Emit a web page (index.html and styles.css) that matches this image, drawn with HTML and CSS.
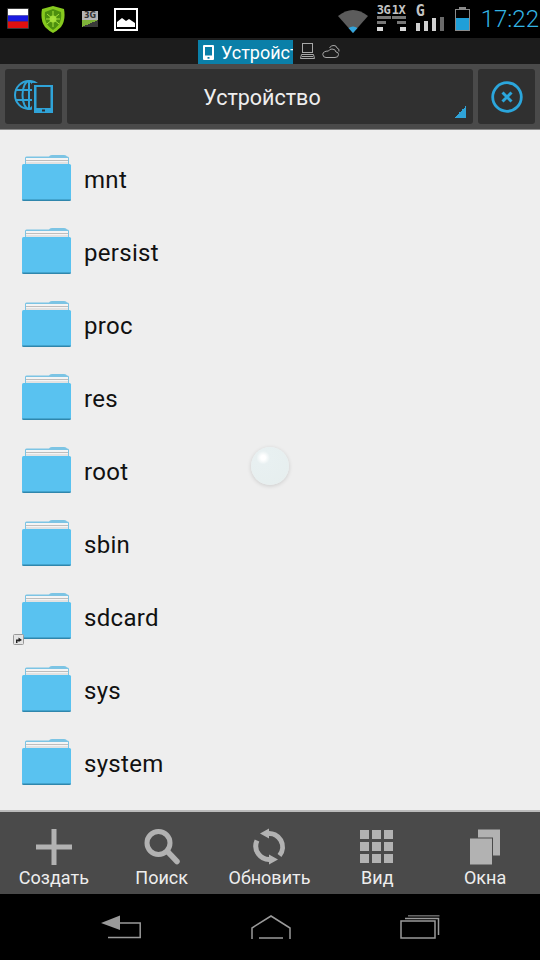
FILE: index.html
```html
<!DOCTYPE html>
<html lang="en">
<head>
    <meta charset="UTF-8">
    <meta name="viewport" content="width=device-width, initial-scale=1.0">
    <title>Устройство</title>
    <link rel="stylesheet" href="styles.css">
</head>
<body>
    <svg class="defs" width="0" height="0">
        <symbol id="folder" viewBox="0 0 50 46">
            <path d="M3 20 V3 Q3 1.500 4.500 1.500 H27 L28 .5 Q28.500 0 30 0 H42 Q43.500 0 44 .5 L45 1.500 H45.500 Q47 1.500 47 3 V20 Z" fill="#7cc4e4"/>
            <rect x="4" y="3" width="42" height="8" fill="#f4f4f4"/>
            <rect x="4" y="5" width="42" height="1" fill="#bdbdbd"/>
            <rect x="4" y="7.500" width="42" height="1" fill="#cfcfcf"/>
            <path d="M0 10.500 Q0 9 1.500 9 H47.500 Q49 9 49 10.500 V44 Q49 46 47 46 H2 Q0 46 0 44 Z" fill="#59c2f0"/>
            <path d="M0 44.500 H49 Q49 46 47 46 H2 Q0 46 0 44.500 Z" fill="#2f86ac"/>
        </symbol>
    </svg>

    <div class="status-bar">
        <div class="status-left">
            <svg class="flag" width="22" height="21" viewBox="0 0 22 21">
                <rect width="22" height="21" rx="1" fill="#3a3a3a"/>
                <rect x="1" y="1" width="20" height="6.500" fill="#fff"/>
                <rect x="1" y="7.500" width="20" height="6" fill="#1a1ae0"/>
                <rect x="1" y="13.500" width="20" height="6.500" fill="#e01010"/>
            </svg>
            <svg class="shield" width="24" height="27" viewBox="0 0 24 27">
                <path d="M12 0 L23 3 Q25 14 20 21 Q16 25 12 27 Q8 25 4 21 Q-1 14 1 3 Z" fill="#86c91e"/>
                <path d="M12 3 L20 6 Q21 14 17.500 19 Q15 22 12 24 Q9 22 6.500 19 Q3 14 4 6 Z" fill="#4c8f0e"/>
                <circle cx="12" cy="13" r="3.500" fill="#9fdc34"/>
                <path d="M6 8 L18 18 M18 8 L6 18 M12 5 V21 M5 13 H19" stroke="#a6e23c" stroke-width="1"/>
            </svg>
            <div class="net-note">
                <span class="net-note-text">3G</span>
                <span class="net-note-bar"></span>
            </div>
            <svg class="picture" width="24" height="23" viewBox="0 0 24 23">
                <rect x="1" y="1" width="22" height="21" fill="#000" stroke="#fff" stroke-width="2"/>
                <path d="M3 19 V14 L8 10 L12 13 L15 11 L21 15 V19 Z" fill="#fff"/>
            </svg>
        </div>
        <div class="status-right">
            <svg class="wifi" width="30" height="24" viewBox="0 0 30 24">
                <path d="M0 7 Q15 -5 30 7 L15 24 Z" fill="#5c5c5c"/>
                <path d="M10.500 19 Q15 16 19.500 19 L15 24 Z" fill="#33a5dc"/>
            </svg>
            <div class="signal-pair">
                <div class="signal-col">
                    <span class="signal-label">3G</span>
                    <span class="signal-line wide"></span>
                    <span class="signal-line mid"></span>
                    <span class="signal-line low"></span>
                </div>
                <div class="signal-col">
                    <span class="signal-label">1X</span>
                    <span class="signal-line wide"></span>
                    <span class="signal-line mid right"></span>
                    <span class="signal-line low right"></span>
                </div>
            </div>
            <div class="signal-g">
                <span class="signal-label">G</span>
                <div class="bars">
                    <span class="bar b1"></span>
                    <span class="bar b2"></span>
                    <span class="bar b3"></span>
                    <span class="bar b4"></span>
                </div>
            </div>
            <svg class="battery" width="15" height="24" viewBox="0 0 15 24">
                <rect x="4" y="0" width="7" height="3" fill="#8a8a8a"/>
                <rect x=".5" y="2.500" width="14" height="21" fill="#000" stroke="#8a8a8a"/>
                <rect x="1" y="11" width="13" height="12" fill="#1f9fd8"/>
            </svg>
            <span class="clock">17:22</span>
        </div>
    </div>

    <div class="tabs">
        <div class="tab-active">
            <svg width="11" height="15" viewBox="0 0 11 15">
                <path fill-rule="evenodd" d="M1 0 H10 Q11 0 11 1 V14 Q11 15 10 15 H1 Q0 15 0 14 V1 Q0 0 1 0 Z M2 2 V10.500 H9 V2 Z M4.500 12 V13.800 H6.500 V12 Z" fill="#fff"/>
            </svg>
            <span class="tab-title">Устройство</span>
        </div>
        <svg class="tab-icon" width="15" height="16" viewBox="0 0 15 16" fill="none" stroke="#a8a8a8">
            <rect x="2.500" y=".5" width="10" height="9"/>
            <path d="M1.500 11.500 H13.500 L14.500 15.500 H.5 Z M2 13.500 H13" />
        </svg>
        <svg class="tab-icon" width="18" height="14" viewBox="0 0 18 14" fill="none" stroke="#a8a8a8">
            <path d="M4 13.500 H13 Q16.500 13.500 16.500 10.500 Q16.500 8 14 8 Q13.500 5 10 5 Q7.500 5 6.500 7 Q1 7 .8 10.500 Q1 13.500 4 13.500 Z"/>
            <path d="M7.500 4 Q9 1 12 1.500 Q14.500 1.500 15 4 Q17.500 4.500 17 7.500"/>
        </svg>
    </div>

    <div class="toolbar">
        <div class="tool-btn">
            <svg width="40" height="33" viewBox="0 0 40 33" fill="none" stroke="#2fa3d8" stroke-width="2">
                <circle cx="15" cy="15" r="14"/>
                <ellipse cx="15" cy="15" rx="6.500" ry="14"/>
                <path d="M15 1 V29 M1.500 10 H28 M1.500 20 H28"/>
                <rect x="18" y="3" width="22" height="30" fill="#303030" stroke="none"/>
                <path fill-rule="evenodd" stroke="none" fill="#2fa3d8" d="M20 5 H39 V33 H20 Z M22.500 7 V28 H36.500 V7 Z M28 29.500 V31.500 H31 V29.500 Z"/>
            </svg>
        </div>
        <div class="title-btn">
            <span>Устройство</span>
            <span class="corner"></span>
        </div>
        <div class="tool-btn close-btn">
            <svg width="32" height="32" viewBox="0 0 32 32" fill="none" stroke="#2ba6dc">
                <circle cx="16" cy="16" r="14.300" stroke-width="2.800"/>
                <path d="M11.500 11.500 L20.500 20.500 M20.500 11.500 L11.500 20.500" stroke-width="3"/>
            </svg>
        </div>
    </div>

    <div class="file-list">
        <div class="file-row">
            <svg class="folder-icon"><use href="#folder"/></svg>
            <span>mnt</span>
        </div>
        <div class="file-row">
            <svg class="folder-icon"><use href="#folder"/></svg>
            <span>persist</span>
        </div>
        <div class="file-row">
            <svg class="folder-icon"><use href="#folder"/></svg>
            <span>proc</span>
        </div>
        <div class="file-row">
            <svg class="folder-icon"><use href="#folder"/></svg>
            <span>res</span>
        </div>
        <div class="file-row">
            <svg class="folder-icon"><use href="#folder"/></svg>
            <span>root</span>
        </div>
        <div class="file-row">
            <svg class="folder-icon"><use href="#folder"/></svg>
            <span>sbin</span>
        </div>
        <div class="file-row">
            <svg class="folder-icon"><use href="#folder"/></svg>
            <svg class="link-badge" width="11" height="11" viewBox="0 0 11 11">
                <rect x=".5" y=".5" width="10" height="10" rx="1" fill="#e4e4e4" stroke="#999"/>
                <path d="M3 9 V5.500 H5.500 V3.500 L9 6 L5.500 8 V7 H4.500 V9 Z" fill="#222"/>
            </svg>
            <span>sdcard</span>
        </div>
        <div class="file-row">
            <svg class="folder-icon"><use href="#folder"/></svg>
            <span>sys</span>
        </div>
        <div class="file-row">
            <svg class="folder-icon"><use href="#folder"/></svg>
            <span>system</span>
        </div>
        <div class="ball"></div>
    </div>

    <div class="bottom-bar">
        <div class="action">
            <svg width="36" height="36" viewBox="0 0 36 36" fill="#b2b2b2">
                <rect x="15.500" y="0" width="5" height="36"/>
                <rect x="0" y="15.500" width="36" height="5"/>
            </svg>
            <span>Создать</span>
        </div>
        <div class="action">
            <svg width="36" height="36" viewBox="0 0 36 36" fill="none" stroke="#b2b2b2">
                <circle cx="14.500" cy="14" r="11.500" stroke-width="5"/>
                <path d="M24 23 L33 32.500" stroke-width="5.500" stroke-linecap="round"/>
            </svg>
            <span>Поиск</span>
        </div>
        <div class="action">
            <svg width="36" height="36" viewBox="0 0 36 36" fill="none" stroke="#b2b2b2" stroke-width="5">
                <path d="M16 4.600 A13.500 13.500 0 0 1 28.500 26.500"/>
                <path d="M20 30.400 A13.500 13.500 0 0 1 6 11.500"/>
                <path d="M9 4.500 L18 -.5 V9.500 Z M27 30.500 L18 25.500 V35.500 Z" fill="#b2b2b2" stroke="none"/>
            </svg>
            <span>Обновить</span>
        </div>
        <div class="action">
            <svg width="34" height="34" viewBox="0 0 34 34" fill="#b2b2b2">
                <rect width="9" height="9"/><rect x="12" width="9" height="9"/><rect x="24" width="9" height="9"/>
                <rect y="12" width="9" height="9"/><rect x="12" y="12" width="9" height="9"/><rect x="24" y="12" width="9" height="9"/>
                <rect y="24" width="9" height="9"/><rect x="12" y="24" width="9" height="9"/><rect x="24" y="24" width="9" height="9"/>
            </svg>
            <span>Вид</span>
        </div>
        <div class="action">
            <svg width="30" height="35" viewBox="0 0 30 35" fill="#b2b2b2">
                <path d="M8 0 H30 V26 H23 V8 H8 Z"/>
                <rect x="0" y="9" width="22" height="26"/>
            </svg>
            <span>Окна</span>
        </div>
    </div>

    <div class="nav-bar">
        <svg width="40" height="24" viewBox="0 0 40 24" fill="none" stroke="#9a9a9a" stroke-width="1.500">
            <path d="M18 8 H39.200 V22.500 H7"/>
            <path d="M0 8 L19 .5 V15 Z" fill="#9a9a9a" stroke="none"/>
        </svg>
        <svg width="40" height="24" viewBox="0 0 40 24" fill="none" stroke="#9a9a9a" stroke-width="1.500">
            <path d="M1 24 V13 L20 1 L39 13 V24 M8 23 H32"/>
        </svg>
        <svg width="40" height="24" viewBox="0 0 40 24" fill="none" stroke="#9a9a9a" stroke-width="1.500">
            <rect x="1" y="6" width="34" height="17"/>
            <path d="M5 3.500 H38.500 V20"/>
            <path d="M8 .8 H39.500" stroke="#6a6a6a"/>
        </svg>
    </div>
</body>
</html>
```

FILE: styles.css
```css
* {
    box-sizing: border-box;
}

body {
    font-family: 'Roboto', 'Liberation Sans', sans-serif;
    margin: 0;
    padding: 0;
    width: 540px;
    height: 960px;
    overflow: hidden;
    display: flex;
    flex-direction: column;
    background-color: #000;
}

svg {
    display: block;
    flex-shrink: 0;
}

.defs {
    position: absolute;
}

/* Status bar */
.status-bar {
    height: 38px;
    background-color: #000;
    display: flex;
    justify-content: space-between;
    align-items: flex-start;
}

.status-left {
    display: flex;
    align-items: flex-start;
    padding-left: 7px;
}

.flag {
    margin-top: 8px;
}

.shield {
    margin: 6px 0 0 12px;
}

.net-note {
    width: 16px;
    height: 16px;
    margin: 11px 0 0 17px;
    background-color: #b5b5b5;
    display: flex;
    flex-direction: column;
    align-items: center;
}

.net-note-text {
    font-family: 'DejaVu Sans', sans-serif;
    font-size: 8px;
    line-height: 9px;
    font-weight: bold;
    color: #333;
}

.net-note-bar {
    width: 100%;
    height: 7px;
    background: linear-gradient(to bottom right, #7fb33a 50%, #3a3a3a 50%);
}

.picture {
    margin: 8px 0 0 16px;
}

.status-right {
    display: flex;
    align-items: flex-start;
}

.wifi {
    margin-top: 9px;
}

.signal-pair {
    display: flex;
    gap: 1px;
    margin: 5px 0 0 9px;
}

.signal-col {
    width: 14px;
    display: flex;
    flex-direction: column;
    align-items: flex-start;
}

.signal-label {
    font-family: 'DejaVu Sans Mono', monospace;
    font-size: 12px;
    line-height: 10px;
    height: 11px;
    font-weight: bold;
    color: #c4c4c4;
    letter-spacing: -.5px;
}

.signal-line {
    height: 3px;
    margin-top: 2px;
    background-color: #777;
}

.signal-line.wide {
    width: 14px;
    margin-top: 0;
}

.signal-line.mid {
    width: 9px;
}

.signal-line.low {
    width: 6px;
    height: 4px;
    margin-top: 3px;
    background-color: #d8d8d8;
}

.signal-line.right {
    align-self: flex-end;
}

.signal-g {
    margin: 5px 0 0 10px;
    width: 28px;
}

.signal-g .signal-label {
    display: block;
    height: 12px;
    font-size: 15px;
    line-height: 13px;
}

.bars {
    display: flex;
    align-items: flex-end;
    gap: 4px;
    height: 14px;
}

.bar {
    width: 4px;
    background-color: #d0d0d0;
}

.b1 {
    height: 8px;
}

.b2 {
    height: 10px;
}

.b3 {
    height: 13px;
}

.b4 {
    height: 14px;
    background-color: #6a6a6a;
}

.battery {
    margin: 7px 0 0 11px;
}

.clock {
    margin: 5px 1px 0 11px;
    font-size: 24px;
    line-height: 28px;
    font-weight: 300;
    color: #33b5e5;
}

/* Location tabs */
.tabs {
    height: 26px;
    background-color: #1c1c1c;
    display: flex;
    align-items: center;
    padding-left: 198px;
}

.tab-active {
    width: 95px;
    height: 24px;
    margin-top: 2px;
    background-color: #0a7fa8;
    overflow: hidden;
    display: flex;
    align-items: center;
    gap: 7px;
    padding-left: 5px;
    color: white;
}

.tab-title {
    font-size: 18px;
    white-space: nowrap;
}

.tab-icon {
    margin-left: 7px;
}

/* Top toolbar */
.toolbar {
    height: 66px;
    background-color: #4a4a4a;
    border-bottom: 1px solid #8a8a8a;
    display: flex;
    gap: 5px;
    padding: 5px;
}

.tool-btn {
    width: 57px;
    background-color: #303030;
    border-radius: 3px;
    display: flex;
    align-items: center;
    justify-content: center;
}

.title-btn {
    flex: 1;
    position: relative;
    background-color: #303030;
    border-radius: 3px;
    display: flex;
    align-items: center;
    justify-content: center;
    color: #eee;
    font-size: 21.500px;
    padding: 2px 16px 0 0;
}

.corner {
    position: absolute;
    right: 7px;
    bottom: 6px;
    width: 12px;
    height: 12px;
    background: linear-gradient(to bottom right, transparent 50%, #2fa3d8 50%);
}

/* File list */
.file-list {
    position: relative;
    height: 682px;
    background-color: #eeeeee;
    border-bottom: 2px solid #bbb;
    padding-top: 13px;
}

.file-row {
    position: relative;
    height: 73px;
    display: flex;
    align-items: center;
    padding-left: 22px;
    gap: 12px;
    font-size: 24px;
    letter-spacing: .3px;
    color: #111;
}

.folder-icon {
    width: 50px;
    height: 46px;
    margin-bottom: 4px;
}

.link-badge {
    position: absolute;
    left: 13px;
    bottom: 9px;
}

.ball {
    position: absolute;
    left: 251px;
    top: 317px;
    width: 38px;
    height: 38px;
    border-radius: 50%;
    background: radial-gradient(circle at 32% 28%, #fff 0, #fff 6%, #e8f0f1 18%, #e6eeee 100%);
    box-shadow: 0 1px 4px rgba(0, 0, 0, 0.15);
}

/* Bottom actions */
.bottom-bar {
    height: 82px;
    background-color: #4a4a4a;
    display: grid;
    grid-template-columns: repeat(5, 1fr);
    padding: 17px 1px 0 0;
}

.action {
    display: flex;
    flex-direction: column;
    align-items: center;
    justify-content: flex-start;
    color: #eee;
    font-size: 18px;
    line-height: 20px;
}

.action svg {
    height: 36px;
    margin-bottom: 3px;
    overflow: visible;
}

/* Navigation */
.nav-bar {
    flex: 1;
    background-color: #000;
    display: flex;
    justify-content: space-between;
    padding: 21px 100px 0 101px;
}
```
